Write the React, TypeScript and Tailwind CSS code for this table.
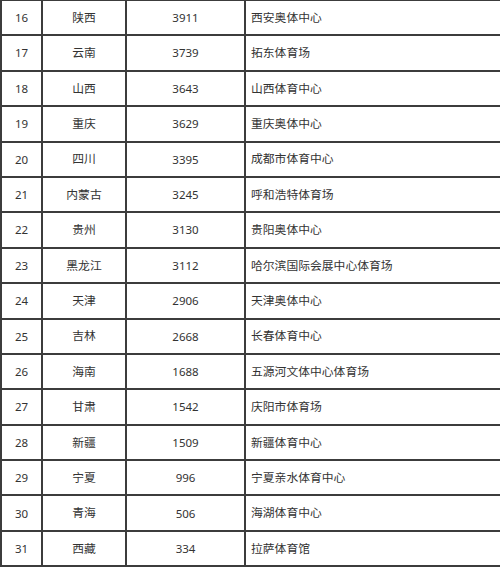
import React from "react";

const rows: [string, string, string, string][] = [
  ["16", "陕西", "3911", "西安奥体中心"],
  ["17", "云南", "3739", "拓东体育场"],
  ["18", "山西", "3643", "山西体育中心"],
  ["19", "重庆", "3629", "重庆奥体中心"],
  ["20", "四川", "3395", "成都市体育中心"],
  ["21", "内蒙古", "3245", "呼和浩特体育场"],
  ["22", "贵州", "3130", "贵阳奥体中心"],
  ["23", "黑龙江", "3112", "哈尔滨国际会展中心体育场"],
  ["24", "天津", "2906", "天津奥体中心"],
  ["25", "吉林", "2668", "长春体育中心"],
  ["26", "海南", "1688", "五源河文体中心体育场"],
  ["27", "甘肃", "1542", "庆阳市体育场"],
  ["28", "新疆", "1509", "新疆体育中心"],
  ["29", "宁夏", "996", "宁夏亲水体育中心"],
  ["30", "青海", "506", "海湖体育中心"],
  ["31", "西藏", "334", "拉萨体育馆"],
];

export default function App() {
  return (
    <div
      className="w-[500px] h-[567px] overflow-hidden bg-white"
      style={{ fontFamily: '"Noto Sans", "Noto Sans CJK SC", sans-serif' }}
    >
      <div className="grid grid-cols-[39px_82px_117px_1fr] auto-rows-[33.4px] gap-[2px] bg-[#3c3c3c] pl-[2px] pt-[1px] pb-[2px]">
        {rows.map((r) => (
          <React.Fragment key={r[0]}>
            <div className="bg-white flex items-center justify-center text-[11.5px] text-[#333]">{r[0]}</div>
            <div className="bg-white flex items-center justify-center text-[11.8px] text-[#333]">{r[1]}</div>
            <div className="bg-white flex items-center justify-center text-[11.5px] text-[#333]">{r[2]}</div>
            <div className="bg-white flex items-center pl-[5px] text-[11.8px] text-[#333]">{r[3]}</div>
          </React.Fragment>
        ))}
      </div>
    </div>
  );
}
